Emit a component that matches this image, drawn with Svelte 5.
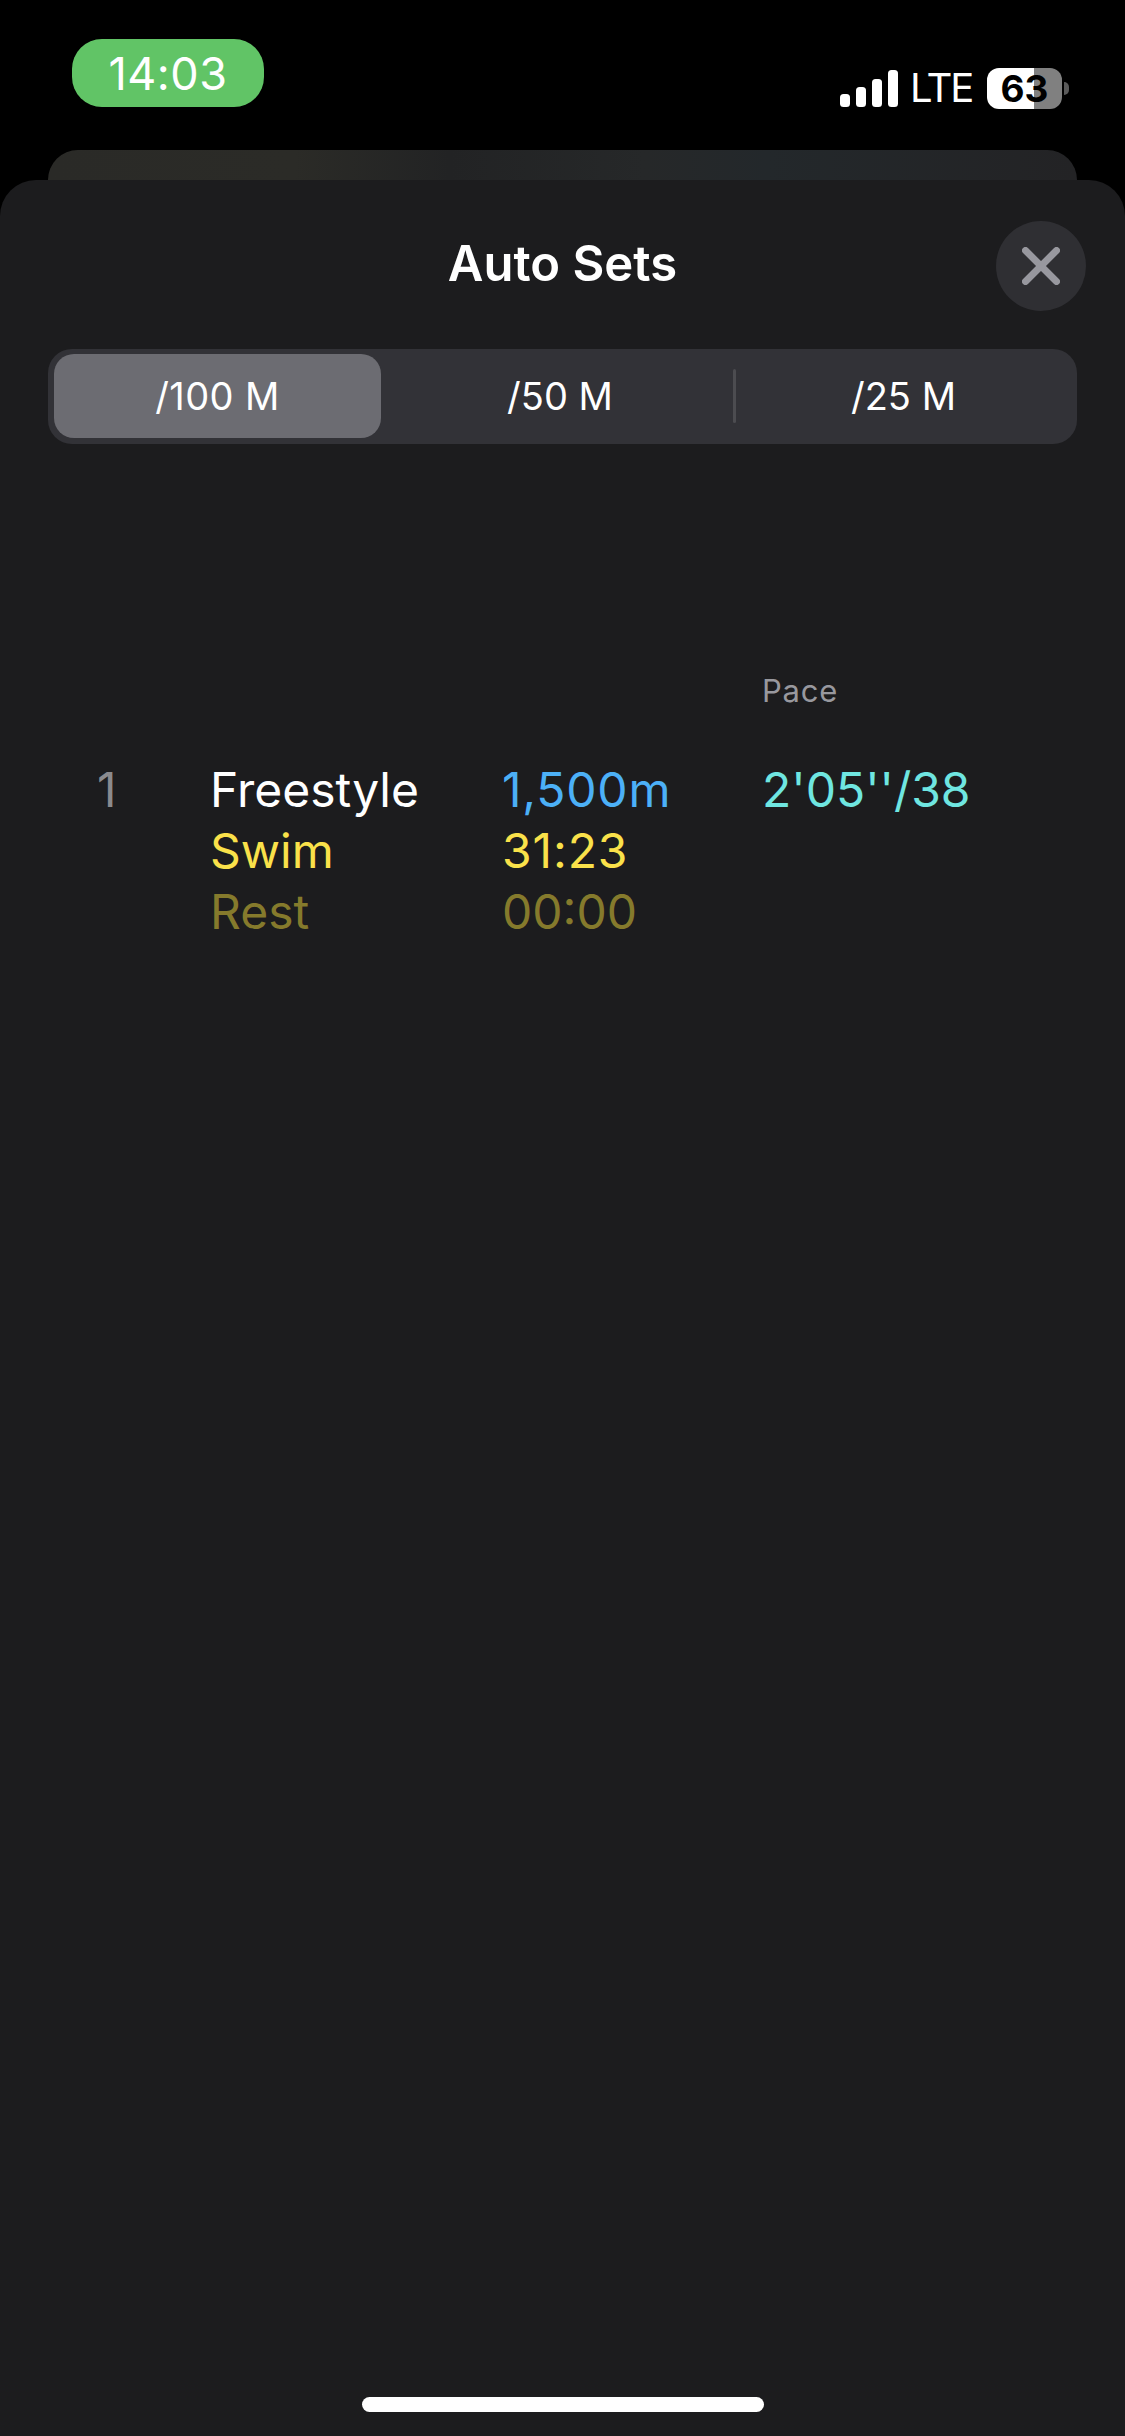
<script>
  const tabs = ['/100 M', '/50 M', '/25 M'];
  let active = $state(0);
</script>

<div class="screen">
  <div class="status">
    <div class="time">14:03</div>
    <div class="right">
      <div class="bars">
        <span class="b1"></span><span class="b2"></span><span class="b3"></span><span class="b4"></span>
      </div>
      <span class="lte">LTE</span>
      <div class="battery">
        <span class="level">63</span>
        <span class="nub"></span>
      </div>
    </div>
  </div>

  <div class="behind"></div>

  <div class="sheet">
    <div class="head">
      <h1>Auto Sets</h1>
      <button class="close" aria-label="Close">
        <svg width="38" height="38" viewBox="0 0 38 38">
          <path d="M3.5 3.5 L34.5 34.5 M34.5 3.5 L3.5 34.5" stroke="#98989f" stroke-width="7" stroke-linecap="round" fill="none" />
        </svg>
      </button>
    </div>

    <div class="segments">
      {#each tabs as tab, i}
        <button class="seg" class:on={active === i} onclick={() => (active = i)}>{tab}</button>
        {#if i === 1}<span class="divider"></span>{/if}
      {/each}
    </div>

    <div class="table">
      <div class="pace-label">Pace</div>
      <div class="num">1</div>
      <div class="white">Freestyle</div>
      <div class="blue">1,500m</div>
      <div class="teal">2'05''/38</div>
      <div class="yellow c2">Swim</div>
      <div class="yellow wide">31:23</div>
      <div class="dim c2">Rest</div>
      <div class="dim">00:00</div>
    </div>

    <div class="home"></div>
  </div>
</div>

<style>
  :global(body) {
    margin: 0;
    background: #000;
  }

  .screen {
    width: 1125px;
    height: 2436px;
    display: flex;
    flex-direction: column;
    background: #000;
    color: #fff;
    font-family: Inter, "Liberation Sans", sans-serif;
    overflow: hidden;
  }

  /* status bar */
  .status {
    height: 150px;
    flex: none;
    display: flex;
    justify-content: space-between;
    align-items: flex-start;
    padding: 39px 63px 0 72px;
    box-sizing: border-box;
  }
  .time {
    width: 192px;
    height: 68px;
    border-radius: 30px;
    background: #61c466;
    display: flex;
    align-items: center;
    justify-content: center;
    font-size: 45px;
    letter-spacing: 0.5px;
  }
  .right {
    display: flex;
    align-items: flex-end;
    margin-top: 29px;
    height: 41px;
  }
  .bars {
    display: flex;
    align-items: flex-end;
    gap: 6px;
    height: 37px;
    margin-bottom: 2px;
    margin-right: 12px;
  }
  .bars span {
    width: 10px;
    background: #fff;
    border-radius: 3.5px;
  }
  .b1 { height: 13px; }
  .b2 { height: 20px; }
  .b3 { height: 28px; }
  .b4 { height: 37px; }
  .lte {
    width: 62px;
    font-size: 40px;
    line-height: 41px;
    height: 41px;
    margin-right: 15px;
    margin-bottom: 1px;
    letter-spacing: -2.2px;
  }
  .battery {
    position: relative;
    width: 75px;
    height: 41px;
    border-radius: 12px;
    background: linear-gradient(to right, #fff 47px, #808080 47px);
    color: #000;
    font-size: 37px;
    font-weight: 700;
    line-height: 41px;
    text-align: center;
  }
  .level {
    display: block;
  }
  .nub {
    position: absolute;
    left: 77px;
    top: 14px;
    width: 5px;
    height: 13px;
    border-radius: 0 6px 6px 0;
    background: #5a5a5a;
  }

  /* card peeking from behind the sheet */
  .behind {
    height: 30px;
    flex: none;
    margin: 0 48px;
    border-radius: 30px 30px 0 0;
    background: linear-gradient(to right, #2a2a27 0%, #2b2b27 24%, #222324 39%, #262829 58%, #23282b 70%, #232325 100%);
  }

  .sheet {
    flex: 1;
    display: flex;
    flex-direction: column;
    background: #1c1c1e;
    border-radius: 36px 36px 0 0;
  }

  .head {
    position: relative;
    height: 169px;
    flex: none;
    display: flex;
    align-items: center;
    justify-content: center;
  }
  h1 {
    margin: 0;
    padding-bottom: 3px;
    font-size: 49px;
    font-weight: 600;
  }
  .close {
    position: absolute;
    right: 39px;
    top: 41px;
    width: 90px;
    height: 90px;
    border: 0;
    padding: 0;
    border-radius: 50%;
    background: #2f2f33;
    display: flex;
    align-items: center;
    justify-content: center;
  }

  /* segmented control */
  .segments {
    margin: 0 48px;
    height: 95px;
    flex: none;
    box-sizing: border-box;
    padding: 5px 6px 6px;
    background: #323237;
    border-radius: 24px;
    display: grid;
    grid-template-columns: 327px 352px 3px 1fr;
    align-items: stretch;
  }
  .seg {
    border: 0;
    padding: 0;
    background: none;
    color: #fff;
    font-family: inherit;
    font-size: 38px;
    border-radius: 20px;
  }
  .seg:nth-child(2) {
    padding-left: 6px;
  }
  .seg.on {
    background: #6c6c72;
    letter-spacing: 0.4px;
  }
  .divider {
    align-self: center;
    height: 54px;
    border-radius: 2px;
    background: #4c4c50;
  }

  /* result table */
  .table {
    margin-top: 230px;
    padding-left: 97px;
    display: grid;
    grid-template-columns: 113px 292px 260px auto;
    grid-template-rows: 85px repeat(3, 61px);
    font-size: 48px;
    line-height: 61px;
  }
  .pace-label {
    grid-column: 4;
    color: #98989e;
    font-size: 31px;
    letter-spacing: 0.8px;
    line-height: 34px;
  }
  .num { color: #8a8a8e; }
  .white { color: #fff; }
  .blue { color: #4cb0f7; letter-spacing: 0.8px; }
  .teal { color: #6fe6e1; }
  .yellow { color: #fae14a; }
  .wide { letter-spacing: 0.9px; }
  .dim { color: #857a2c; }
  .c2 { grid-column: 2; }

  .home {
    margin: auto auto 24px;
    width: 402px;
    height: 15px;
    border-radius: 8px;
    background: #fff;
  }
</style>
